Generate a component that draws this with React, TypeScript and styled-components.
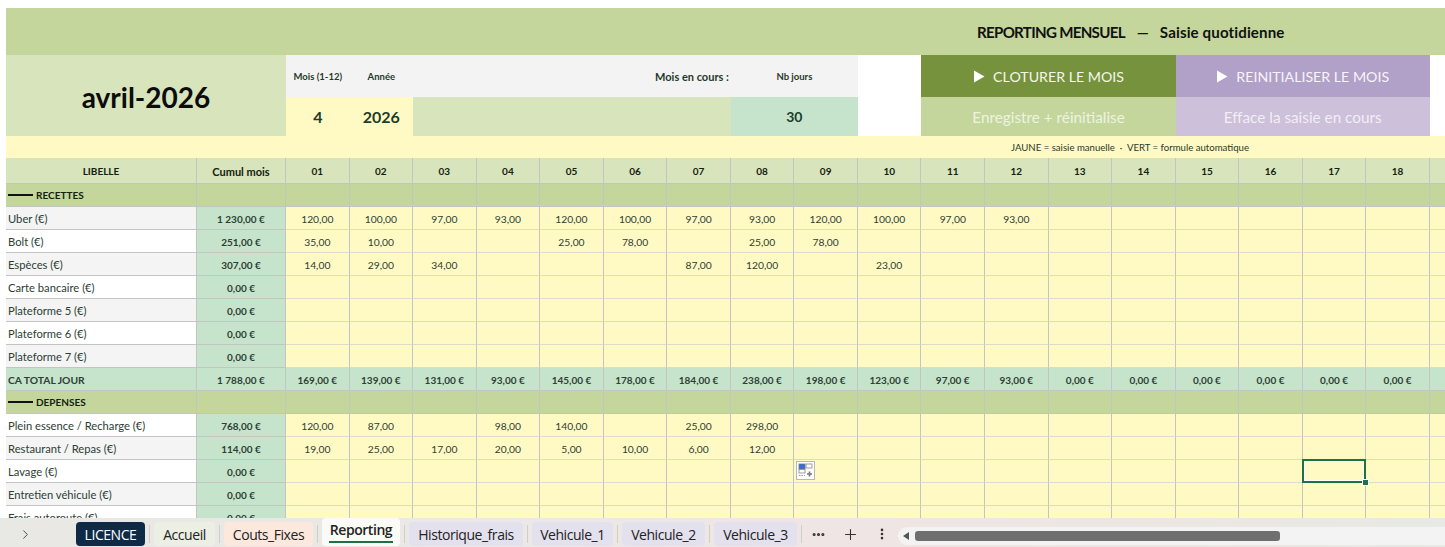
import React from "react";
import styled, { createGlobalStyle } from "styled-components";
import { ChevronRight, Plus, EllipsisVertical, Ellipsis } from "lucide-react";

const Global = createGlobalStyle`
  html, body { margin: 0; padding: 0; background: #fff; overflow: hidden; }
  body { font-family: "Lato", "Liberation Sans", sans-serif; color: #1f3a2a; }
`;

const Page = styled.div`
  width: 1445px;
  height: 547px;
  display: flex;
  flex-direction: column;
  overflow: hidden;
`;
const SheetArea = styled.div`
  height: 518px;
  flex: none;
  overflow: hidden;
  padding: 8px 0 0 6px;
  box-sizing: border-box;
`;
const Sheet = styled.div`
  display: grid;
  width: 1507px;
  grid-template-columns: 191px 89px repeat(19, 63.55px);
  grid-template-rows: 47px 42px 39px 22px 26px repeat(15, 23px);
`;

const TitleBand = styled.div`
  grid-column: 1 / -1;
  background: #c4d69b;
  display: flex;
  align-items: center;
  gap: 12px;
  padding-left: 971px;
  font-size: 15.1px;
  font-weight: 700;
  color: #111;
  white-space: pre;
`;
const TitleCaps = styled.span`
  letter-spacing: -0.7px;
`;
const TitleTail = styled.span`
  margin-left: -1px;
  letter-spacing: 0.12px;
`;
const MonthTitle = styled.div`
  grid-column: 1 / 3;
  grid-row: 2 / 4;
  background: #d8e4bc;
  display: flex;
  align-items: center;
  justify-content: center;
  padding-top: 2px;
  box-sizing: border-box;
  font-size: 28px;
  font-weight: 700;
  color: #0c0c0c;
`;
const ParamLabel = styled.div<{ $span?: number; $end?: boolean; $size?: number }>`
  grid-column: span ${(p) => p.$span ?? 1};
  background: #f3f3f3;
  display: flex;
  align-items: center;
  justify-content: ${(p) => (p.$end ? "flex-end" : "center")};
  padding-right: ${(p) => (p.$end ? 2 : 0)}px;
  font-size: ${(p) => p.$size ?? 9.5}px;
  font-weight: 700;
  color: #1f3a2a;
`;
const ParamValue = styled.div<{ $bg: string; $span?: number; $size?: number }>`
  grid-column: span ${(p) => p.$span ?? 1};
  background: ${(p) => p.$bg};
  display: flex;
  align-items: center;
  justify-content: center;
  font-size: ${(p) => p.$size ?? 16}px;
  font-weight: 700;
  color: #1c3d2b;
`;
const Blank = styled.div`
  background: #fff;
`;
const ActionCell = styled.div<{ $bg: string; $color: string; $size: number }>`
  grid-column: span 4;
  background: ${(p) => p.$bg};
  color: ${(p) => p.$color};
  font-size: ${(p) => p.$size}px;
  display: flex;
  align-items: center;
  justify-content: center;
  gap: 8px;
`;
const PlayIcon = styled.svg`
  width: 12px;
  height: 13px;
  flex: none;
`;
const NoteRow = styled.div`
  grid-column: 1 / -1;
  background: #fff9c4;
  display: flex;
  align-items: center;
  padding-left: 1005px;
  font-size: 9.6px;
  color: #2a3a2a;
  white-space: pre;
`;

type Kind = "head" | "section" | "labelA" | "labelB" | "cumul" | "input" | "total";

const palette: Record<Kind, string> = {
  head: "#d8e4bc",
  section: "#c4d69b",
  labelA: "#f4f4f4",
  labelB: "#ffffff",
  cumul: "#c6e4cb",
  input: "#fff9c4",
  total: "#c6e4cb",
};

const Cell = styled.div<{ $kind: Kind; $left?: boolean; $bold?: boolean; $size?: number }>`
  position: relative;
  box-sizing: border-box;
  min-width: 0;
  background: ${(p) => palette[p.$kind]};
  border-right: 1px solid #c4c4c0;
  border-bottom: 1px solid ${(p) => (p.$kind === "input" ? "#dcdcc8" : "#c4c4c0")};
  display: flex;
  align-items: center;
  justify-content: ${(p) => (p.$left ? "flex-start" : "center")};
  padding: ${(p) => (p.$kind === "section" ? 0 : 1)}px 0 0 ${(p) => (p.$left ? 2 : 0)}px;
  font-size: ${(p) => p.$size ?? 10}px;
  font-weight: ${(p) => (p.$bold ? 700 : 400)};
  color: ${(p) => (p.$kind === "head" || p.$kind === "section" ? "#14210f" : "#2c4034")};
  white-space: nowrap;
`;
const SectionLine = styled.span`
  display: inline-block;
  width: 25px;
  height: 0;
  border-top: 2px solid #111;
  margin-right: 3px;
`;
const Selection = styled.div`
  position: absolute;
  z-index: 2;
  inset: -1px -1px -1px -1px;
  border: 2px solid #1e7145;
  box-shadow: inset 0 0 0 1px #fff;
  &::after {
    content: "";
    position: absolute;
    right: -5px;
    bottom: -5px;
    width: 5px;
    height: 5px;
    background: #1e7145;
    border: 1px solid #fff;
  }
`;
const AutofillBox = styled.div`
  position: absolute;
  left: 2px;
  top: 1px;
  width: 19px;
  height: 19px;
  box-sizing: border-box;
  background: #fff;
  border: 1px solid #b8b8b8;
  display: flex;
  align-items: center;
  justify-content: center;
`;

const TabBar = styled.div`
  flex: 1;
  position: relative;
  display: flex;
  align-items: flex-end;
  padding-bottom: 1px;
  background: linear-gradient(90deg, #e8e8e4 0%, #ece8e6 40%, #efe5e4 60%, #ebe7e3 85%, #e8e9e4 100%);
`;
const Chevron = styled.div`
  width: 50px;
  height: 24px;
  flex: none;
  margin-right: 26px;
  display: flex;
  align-items: center;
  justify-content: center;
  color: #444;
`;
const Tab = styled.div<{ $bg: string; $color?: string; $w: number; $active?: boolean }>`
  position: relative;
  box-sizing: border-box;
  width: ${(p) => p.$w}px;
  height: ${(p) => (p.$active ? 28 : 24)}px;
  flex: none;
  border-radius: 4px;
  background: ${(p) => p.$bg};
  color: ${(p) => p.$color ?? "#222"};
  font-family: "Open Sans", "Noto Sans", sans-serif;
  font-size: 14px;
  letter-spacing: -0.45px;
  display: flex;
  align-items: center;
  justify-content: center;
  padding-bottom: ${(p) => (p.$active ? 5 : 0)}px;
  font-weight: ${(p) => (p.$active ? 600 : 400)};
`;
const ActiveLine = styled.div`
  position: absolute;
  left: 7px;
  right: 7px;
  bottom: 3px;
  height: 2px;
  background: #1e7145;
`;
const Sep = styled.div`
  width: 1px;
  height: 18px;
  margin: 0 4px 3px;
  background: #cfcfca;
  flex: none;
`;
const BarIcon = styled.div<{ $w: number }>`
  width: ${(p) => p.$w}px;
  height: 24px;
  flex: none;
  display: flex;
  align-items: center;
  justify-content: center;
  color: #333;
`;
const Scroll = styled.div`
  flex: 1;
  height: 18px;
  margin: 0 0 1px 4px;
  border-radius: 9px 0 0 9px;
  background: #f3f3f3;
  display: flex;
  align-items: center;
  padding-left: 5px;
  gap: 6px;
`;
const ScrollArrow = styled.div`
  width: 0;
  height: 0;
  border-top: 4px solid transparent;
  border-bottom: 4px solid transparent;
  border-right: 6px solid #555;
`;
const Thumb = styled.div`
  width: 365px;
  height: 10px;
  border-radius: 3px;
  background: #6f6f6f;
`;

const days = Array.from({ length: 19 }, (_, i) => (i < 18 ? String(i + 1).padStart(2, "0") : ""));

const rows: { label: string; cumul: string; vals: Record<number, string>; shade: "A" | "B" }[] = [
  { label: "Uber (€)", cumul: "1 230,00 €", shade: "A", vals: { 0: "120,00", 1: "100,00", 2: "97,00", 3: "93,00", 4: "120,00", 5: "100,00", 6: "97,00", 7: "93,00", 8: "120,00", 9: "100,00", 10: "97,00", 11: "93,00" } },
  { label: "Bolt (€)", cumul: "251,00 €", shade: "B", vals: { 0: "35,00", 1: "10,00", 4: "25,00", 5: "78,00", 7: "25,00", 8: "78,00" } },
  { label: "Espèces (€)", cumul: "307,00 €", shade: "A", vals: { 0: "14,00", 1: "29,00", 2: "34,00", 6: "87,00", 7: "120,00", 9: "23,00" } },
  { label: "Carte bancaire (€)", cumul: "0,00 €", shade: "B", vals: {} },
  { label: "Plateforme 5 (€)", cumul: "0,00 €", shade: "A", vals: {} },
  { label: "Plateforme 6 (€)", cumul: "0,00 €", shade: "B", vals: {} },
  { label: "Plateforme 7 (€)", cumul: "0,00 €", shade: "A", vals: {} },
];
const rows2: typeof rows = [
  { label: "Plein essence / Recharge (€)", cumul: "768,00 €", shade: "B", vals: { 0: "120,00", 1: "87,00", 3: "98,00", 4: "140,00", 6: "25,00", 7: "298,00" } },
  { label: "Restaurant / Repas (€)", cumul: "114,00 €", shade: "A", vals: { 0: "19,00", 1: "25,00", 2: "17,00", 3: "20,00", 4: "5,00", 5: "10,00", 6: "6,00", 7: "12,00" } },
  { label: "Lavage (€)", cumul: "0,00 €", shade: "B", vals: {} },
  { label: "Entretien véhicule (€)", cumul: "0,00 €", shade: "A", vals: {} },
  { label: "Frais autoroute (€)", cumul: "0,00 €", shade: "B", vals: {} },
];
const totals = ["169,00 €", "139,00 €", "131,00 €", "93,00 €", "145,00 €", "178,00 €", "184,00 €", "238,00 €", "198,00 €", "123,00 €", "97,00 €", "93,00 €", "0,00 €", "0,00 €", "0,00 €", "0,00 €", "0,00 €", "0,00 €", ""];

const AutofillIcon = () => (
  <svg width="15" height="15" viewBox="0 0 15 15">
    <rect x="1" y="1" width="6" height="5" fill="#2f6fe0" stroke="#777" strokeWidth="0.8" />
    <rect x="8" y="1" width="6" height="4" fill="#fff" stroke="#888" strokeWidth="0.8" />
    <rect x="1" y="6.5" width="6" height="3.5" fill="#fff" stroke="#888" strokeWidth="0.8" />
    <path d="M1 12.5h6" stroke="#999" strokeDasharray="1.5 1" />
    <path d="M11.5 8.5v5M9 11h5" stroke="#777" strokeWidth="1.6" />
  </svg>
);

const Play = () => (
  <PlayIcon viewBox="0 0 12 13">
    <path d="M1 0.5L11.5 6.5L1 12.5Z" fill="#fff" />
  </PlayIcon>
);

function DataRow({ r, isLavage }: { r: (typeof rows)[number]; isLavage?: boolean }) {
  return (
    <>
      <Cell $kind={r.shade === "A" ? "labelA" : "labelB"} $left $size={11.2}>{r.label}</Cell>
      <Cell $kind="cumul" $bold>{r.cumul}</Cell>
      {days.map((d, i) => (
        <Cell key={i} $kind="input" $size={10.3}>
          {r.vals[i]}
          {isLavage && i === 8 && (
            <AutofillBox>
              <AutofillIcon />
            </AutofillBox>
          )}
          {isLavage && i === 16 && <Selection />}
        </Cell>
      ))}
    </>
  );
}

function SectionRow({ label }: { label: string }) {
  return (
    <>
      <Cell $kind="section" $left $bold><SectionLine />{label}</Cell>
      <Cell $kind="section" />
      {days.map((_, i) => <Cell key={i} $kind="section" />)}
    </>
  );
}

export default function App() {
  return (
    <Page>
      <Global />
      <SheetArea>
        <Sheet>
          <TitleBand>
            <TitleCaps>REPORTING MENSUEL</TitleCaps>
            <span>—</span>
            <TitleTail>Saisie quotidienne</TitleTail>
          </TitleBand>

          <MonthTitle>avril-2026</MonthTitle>
          <ParamLabel>Mois (1-12)</ParamLabel>
          <ParamLabel>Année</ParamLabel>
          <ParamLabel $span={5} $end $size={11}>Mois en cours :</ParamLabel>
          <ParamLabel $span={2}>Nb jours</ParamLabel>
          <Blank />
          <ActionCell $bg="#76923c" $color="#f4f7ec" $size={14.2}><Play />CLOTURER LE MOIS</ActionCell>
          <ActionCell $bg="#b1a0c7" $color="#f7f4fa" $size={14.2}><Play />REINITIALISER LE MOIS</ActionCell>
          <Blank />

          <ParamValue $bg="#fff9c4">4</ParamValue>
          <ParamValue $bg="#fff9c4">2026</ParamValue>
          <ParamValue $bg="#d8e4bc" $span={5} />
          <ParamValue $bg="#c6e4cb" $span={2} $size={14}>30</ParamValue>
          <Blank />
          <ActionCell $bg="#c4d69b" $color="#eef3e0" $size={15.3}>Enregistre + réinitialise</ActionCell>
          <ActionCell $bg="#ccc0da" $color="#f2eef6" $size={15.3}>Efface la saisie en cours</ActionCell>
          <Blank />

          <NoteRow>{"JAUNE = saisie manuelle  ·  VERT = formule automatique"}</NoteRow>

          <Cell $kind="head" $bold>LIBELLE</Cell>
          <Cell $kind="head" $bold $size={11}>Cumul mois</Cell>
          {days.map((d, i) => <Cell key={i} $kind="head" $bold>{d}</Cell>)}

          <SectionRow label="RECETTES" />
          {rows.map((r) => <DataRow key={r.label} r={r} />)}

          <Cell $kind="total" $left $bold $size={10.3}>CA TOTAL JOUR</Cell>
          <Cell $kind="total" $bold>1 788,00 €</Cell>
          {totals.map((t, i) => <Cell key={i} $kind="total" $bold>{t}</Cell>)}

          <SectionRow label="DEPENSES" />
          {rows2.map((r) => <DataRow key={r.label} r={r} isLavage={r.label.startsWith("Lavage")} />)}
        </Sheet>
      </SheetArea>
      <TabBar>
        <Chevron><ChevronRight size={15} strokeWidth={1.5} /></Chevron>
        <Tab $w={69} $bg="#0f2a47" $color="#fff">LICENCE</Tab>
        <Sep />
        <Tab $w={61} $bg="#ecefe3">Accueil</Tab>
        <Sep />
        <Tab $w={89} $bg="#fce8dd">Couts_Fixes</Tab>
        <Sep />
        <Tab $w={78} $bg="#fafbf7" $active>Reporting<ActiveLine /></Tab>
        <Sep />
        <Tab $w={114} $bg="#e4e1ee">Historique_frais</Tab>
        <Sep />
        <Tab $w={81} $bg="#e4e1ee">Vehicule_1</Tab>
        <Sep />
        <Tab $w={83} $bg="#e4e1ee">Vehicule_2</Tab>
        <Sep />
        <Tab $w={83} $bg="#e4e1ee">Vehicule_3</Tab>
        <Sep />
        <BarIcon $w={24}><Ellipsis size={15} strokeWidth={3} /></BarIcon>
        <BarIcon $w={40}><Plus size={17} strokeWidth={1.5} /></BarIcon>
        <BarIcon $w={24}><EllipsisVertical size={14} strokeWidth={2.5} /></BarIcon>
        <Scroll>
          <ScrollArrow />
          <Thumb />
        </Scroll>
      </TabBar>
    </Page>
  );
}
